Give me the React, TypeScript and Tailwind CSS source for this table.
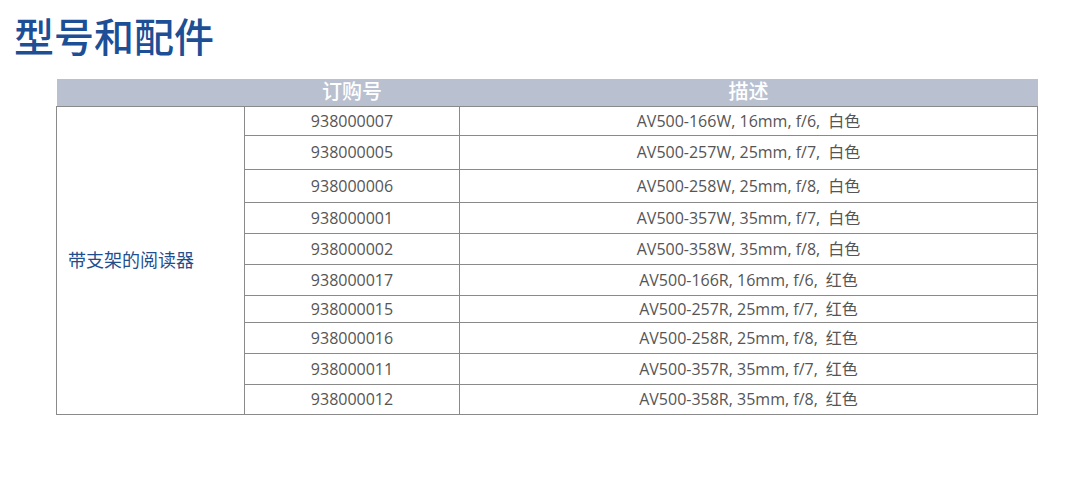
const rows = [
  { code: "938000007", desc: "AV500-166W, 16mm, f/6,", color: "白色", h: "h-[29px]" },
  { code: "938000005", desc: "AV500-257W, 25mm, f/7,", color: "白色", h: "h-[34px]" },
  { code: "938000006", desc: "AV500-258W, 25mm, f/8,", color: "白色", h: "h-[33px]" },
  { code: "938000001", desc: "AV500-357W, 35mm, f/7,", color: "白色", h: "h-[31px]" },
  { code: "938000002", desc: "AV500-358W, 35mm, f/8,", color: "白色", h: "h-[31px]" },
  { code: "938000017", desc: "AV500-166R, 16mm, f/6,", color: "红色", h: "h-[31px]" },
  { code: "938000015", desc: "AV500-257R, 25mm, f/7,", color: "红色", h: "h-[27px]" },
  { code: "938000016", desc: "AV500-258R, 25mm, f/8,", color: "红色", h: "h-[31px]" },
  { code: "938000011", desc: "AV500-357R, 35mm, f/7,", color: "红色", h: "h-[31px]" },
  { code: "938000012", desc: "AV500-358R, 35mm, f/8,", color: "红色", h: "h-[30px]" },
];

const font = { fontFamily: '"Open Sans", "Noto Sans CJK SC", sans-serif' };

export default function App() {
  return (
    <div className="w-[1077px] h-[493px] bg-white" style={font}>
      <h1 className="pl-[14px] pt-[15px] text-[40px] leading-[44px] font-medium text-[#1c4f95]">
        型号和配件
      </h1>
      <div className="pl-[56px] pt-[20px]">
        <table className="w-[981px] border-collapse table-fixed">
          <colgroup>
            <col className="w-[188px]" />
            <col className="w-[215px]" />
            <col className="w-[578px]" />
          </colgroup>
          <thead>
            <tr className="h-[27px] bg-[#b9c1d1] text-white text-[20px] border-b border-[#8a8a8a]">
              <th className="font-medium p-0"></th>
              <th className="font-medium p-0 leading-none">订购号</th>
              <th className="font-medium p-0 leading-none">描述</th>
            </tr>
          </thead>
          <tbody className="text-[16px] text-[#555555]">
            {rows.map((r, i) => (
              <tr key={r.code} className={r.h}>
                {i === 0 && (
                  <td
                    rowSpan={rows.length}
                    className="border border-[#8a8a8a] pl-[11px] align-middle text-[18px] text-[#1f4f8f]"
                  >
                    带支架的阅读器
                  </td>
                )}
                <td className="border border-[#8a8a8a] p-0 text-center leading-none">
                  {r.code}
                </td>
                <td className="border border-[#8a8a8a] p-0 text-center leading-none">
                  {r.desc}
                  <span className="ml-[8px]">{r.color}</span>
                </td>
              </tr>
            ))}
          </tbody>
        </table>
      </div>
    </div>
  );
}
